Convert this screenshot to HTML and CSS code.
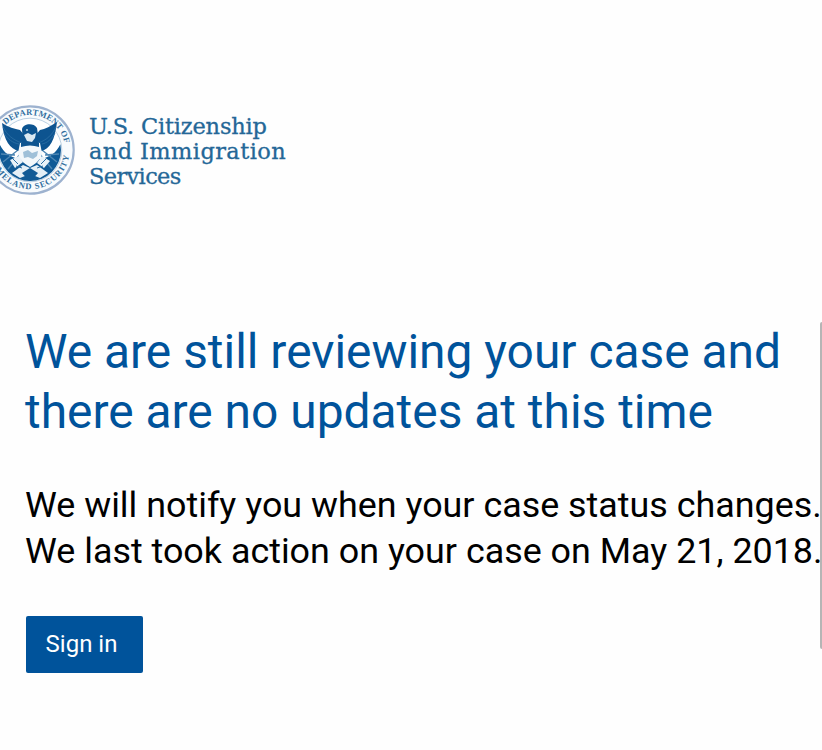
FILE: index.html
```html
<!DOCTYPE html>
<html lang="en">

<head>
    <meta charset="UTF-8">
    <meta name="viewport" content="width=device-width, initial-scale=1.0">
    <title>Case Status</title>
    <link rel="stylesheet" href="styles.css">
</head>

<body>
    <header class="header">
        <svg class="seal" viewBox="0 0 90 90" role="img" aria-label="Department of Homeland Security">
            <defs>
                <path id="arc-top" d="M20.7 19.8A35 35 0 0 1 79.7 40.1" />
                <path id="arc-bottom" d="M5.9 50.5A39.5 39.5 0 0 0 84.3 48.4" />
                <clipPath id="disc">
                    <circle cx="45" cy="45" r="31" />
                </clipPath>
            </defs>
            <!-- rings -->
            <circle cx="45" cy="45" r="43.7" fill="#f8fbfd" stroke="#9db2cf" stroke-width="2.2" />
            <circle cx="45" cy="45" r="31.8" fill="#fff" stroke="#a9c4da" stroke-width=".8" />
            <text class="seal-text">
                <textPath href="#arc-top" textLength="75">DEPARTMENT OF</textPath>
            </text>
            <text class="seal-text">
                <textPath href="#arc-bottom" textLength="112">HOMELAND SECURITY</textPath>
            </text>
            <!-- lower field -->
            <g clip-path="url(#disc)">
                <path d="M10 36l5 4c4 8 10 12 19 14h22c9-2 15-6 19-14l5-4v44H10z" fill="#105a96" />
                <path d="M33 45L18 57M36 48L23 64M57 45L72 57M54 48L67 64M16 49l14 1M74 49l-14 1" stroke="#4d86b3" stroke-width="1.4" />
                <path d="M27 68l11-8 7 3 7-3 11 8-8 5-10-4-10 4z" fill="#e4eff6" />
                <path d="M37 68l8-5 8 5-8 9z" fill="#105a96" />
            </g>
            <!-- wings -->
            <path d="M17 18c6 4 13 6 18 7l5 6v13l-6 2c-9-2-15-10-17-28z" fill="#0d5490" />
            <path d="M72 17c-6 4-12 7-17 8l-5 6v13l6 2c9-2 14-11 16-29z" fill="#0d5490" />
            <path d="M18 22c4 8 10 13 19 16M19 28c3 6 9 10 15 11M71 22c-4 8-9 13-18 16M70 28c-3 6-8 10-13 11" fill="none" stroke="#2d70a5" stroke-width=".8" />
            <!-- head -->
            <path d="M37 24c1-5 11-7 15-1l1 7-2 8-7 3-6-3z" fill="#0d5490" />
            <path d="M39 30l4-2 4 2 4-2-1 5-3 4-5-1z" fill="#dbe9f2" />
            <circle cx="42" cy="25" r="1" fill="#b9d1e3" />
            <!-- shield -->
            <path d="M35 38h20l2 10c-1 6-5 10-12 14-7-4-11-8-12-14z" fill="#f3f8fb" />
            <path d="M36 38h18v4c-6-2-12-2-18 0z" fill="#0d5490" />
            <path d="M38 47l5-2 4 3 6-2-1 5-4 3-5-2-4 1z" fill="#9fc0d8" />
            <path d="M25 55l9-4 4 6-8 6zM57 51l8 5-6 7-7-5z" fill="#e9f2f8" />
            <path d="M28 54l5 5M61 54l-5 5M31 61l6 2M58 61l-6 2" stroke="#2d70a5" />
        </svg>
        <div class="wordmark">
            <div class="line-1">U.S. Citizenship</div>
            <div class="line-2">and Immigration</div>
            <div class="line-3">Services</div>
        </div>
    </header>

    <main class="status">
        <h1 class="title">We are still reviewing your case and <br>there are no updates at this time</h1>
        <p class="message">We will notify you when your case status changes.<br>We last took action on your case on May 21, 2018.</p>
        <button class="sign-in">Sign in</button>
    </main>

    <!-- scroll indicator at the window edge -->
    <div class="scrollbar"></div>
</body>

</html>
```
FILE: styles.css
```css
body {
    margin: 0;
    height: 750px;
    overflow: hidden;
    background: #fefefe;
    font-family: Roboto, Arial, sans-serif;
}

.header {
    display: flex;
    padding-top: 105px;
    height: 91px;
}

.seal {
    width: 90px;
    height: 90px;
    margin-left: -15px;
    flex: none;
}

.seal-text {
    font-family: "Liberation Serif", serif;
    font-size: 8.5px;
    font-weight: bold;
    fill: #326f9f;
}

.wordmark {
    margin-left: 14px;
    padding-top: 9px;
    color: #246797;
    font-family: "DejaVu Serif", serif;
    font-size: 22.5px;
    line-height: 24.8px;
    white-space: nowrap;
    -webkit-text-stroke: 0.3px #246797;
}

.line-1 {
    letter-spacing: -0.2px;
}

.line-2 {
    letter-spacing: 0.4px;
}

.line-3 {
    letter-spacing: -0.65px;
}

.status {
    padding: 127px 0 0 25px;
}

.title {
    margin: 0;
    color: #00539b;
    font-size: 47.9px;
    font-weight: 400;
    line-height: 59.5px;
    white-space: nowrap;
}

.message {
    margin: 41px 0 0;
    color: #000;
    font-size: 35.86px;
    line-height: 45.5px;
    white-space: nowrap;
}

.sign-in {
    display: block;
    width: 117px;
    height: 57px;
    margin: 42px 0 0 1px;
    padding: 0 6px 1px 0;
    border: 0;
    border-radius: 2px;
    background: #00539b;
    color: #fff;
    font-family: inherit;
    font-size: 24px;
}

.scrollbar {
    position: absolute;
    top: 322px;
    right: 0;
    width: 2px;
    height: 327px;
    background: #b5b5b5;
    border-radius: 2px 0 0 2px;
}
```
